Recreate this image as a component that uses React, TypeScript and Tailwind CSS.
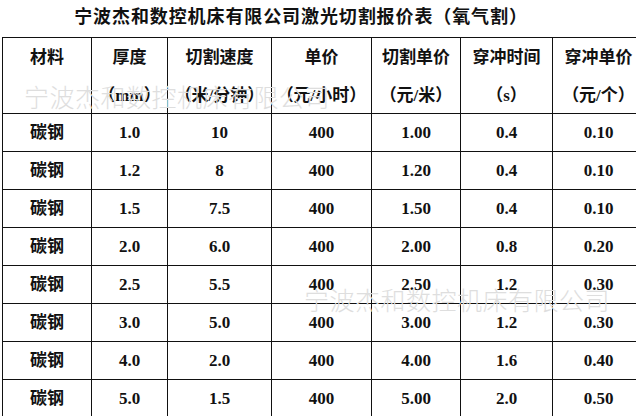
import React from "react";

const head: [string, string][] = [
  ["材料", ""],
  ["厚度", "（mm）"],
  ["切割速度", "（米/分钟）"],
  ["单价", "（元/小时）"],
  ["切割单价", "（元/米）"],
  ["穿冲时间", "（s）"],
  ["穿冲单价", "（元/个）"],
];

const rows = [
  ["1.0", "10", "400", "1.00", "0.4", "0.10"],
  ["1.2", "8", "400", "1.20", "0.4", "0.10"],
  ["1.5", "7.5", "400", "1.50", "0.4", "0.10"],
  ["2.0", "6.0", "400", "2.00", "0.8", "0.20"],
  ["2.5", "5.5", "400", "2.50", "1.2", "0.30"],
  ["3.0", "5.0", "400", "3.00", "1.2", "0.30"],
  ["4.0", "2.0", "400", "4.00", "1.6", "0.40"],
  ["5.0", "1.5", "400", "5.00", "2.0", "0.50"],
];

const serif = "font-['Liberation_Serif','Noto_Sans_CJK_SC',serif]";
const cols = "grid grid-cols-[89px_76px_104px_100px_89px_92px_92px]";

export default function App() {
  return (
    <div className={`relative w-[636px] h-[416px] overflow-hidden bg-white text-[#111] ${serif}`}>
      {/* Title */}
      <div className="h-[37px] w-[602px] flex items-center justify-center text-[18px] font-semibold tracking-[0.9px] pb-[2px]">
        宁波杰和数控机床有限公司激光切割报价表（氧气割）
      </div>

      {/* Table */}
      <div className="ml-[2px] w-[640px] border-t-[1.5px] border-l-[1.5px] border-[#111]">
        <div className={cols}>
          {head.map(([a, b], i) => (
            <div
              key={i}
              className="h-[76px] border-r-[1.5px] border-b-[1.5px] border-[#111] flex flex-col items-center pt-[9px] font-bold text-[17px]"
            >
              <div className="h-[22px] leading-[22px]">{a}</div>
              <div className="h-[22px] leading-[22px] mt-[16px]">{b}</div>
            </div>
          ))}
        </div>
        {rows.map((r, ri) => (
          <div key={ri} className={cols}>
            <div className="h-[38px] border-r-[1.5px] border-b-[1.5px] border-[#111] flex items-center justify-center font-bold text-[17px]">
              碳钢
            </div>
            {r.map((v, ci) => (
              <div
                key={ci}
                className="h-[38px] border-r-[1.5px] border-b-[1.5px] border-[#111] flex items-center justify-center font-bold text-[17px]"
              >
                {v}
              </div>
            ))}
          </div>
        ))}
      </div>

      {/* Watermarks */}
      <div className="absolute left-[24px] top-[78px] text-[25px] text-[#dedede] tracking-[0.5px] font-['Noto_Sans_CJK_SC',sans-serif] font-light pointer-events-none whitespace-nowrap">
        宁波杰和数控机床有限公司
      </div>
      <div className="absolute left-[304px] top-[281px] text-[25px] text-[#dedede] tracking-[0.5px] font-['Noto_Sans_CJK_SC',sans-serif] font-light pointer-events-none whitespace-nowrap">
        宁波杰和数控机床有限公司
      </div>
    </div>
  );
}
